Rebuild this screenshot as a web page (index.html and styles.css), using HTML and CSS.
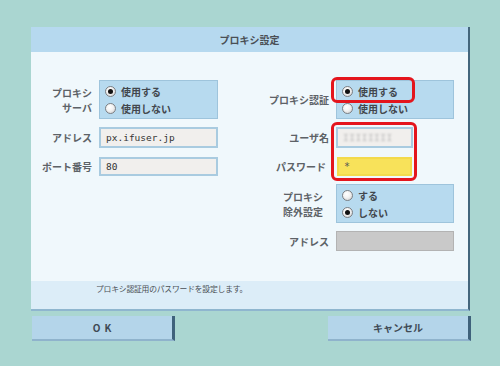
FILE: index.html
```html
<!DOCTYPE html>
<html lang="ja">
<head>
<meta charset="utf-8">
<title>プロキシ設定</title>
<link rel="stylesheet" href="styles.css">
</head>
<body>
<div class="screen">
  <div class="dialog">
    <div class="title">プロキシ設定</div>
    <div class="body">
      <div class="form">
        <div class="label l1 r1 two">プロキシ<br>サーバ</div>
        <div class="radiobox c1 r1">
          <div class="opt"><span class="radio on"></span>使用する</div>
          <div class="opt"><span class="radio"></span>使用しない</div>
        </div>
        <div class="label l2 r1">プロキシ認証</div>
        <div class="radiobox c2 r1">
          <div class="opt"><span class="radio on"></span>使用する</div>
          <div class="opt"><span class="radio"></span>使用しない</div>
        </div>

        <div class="label l1 r2">アドレス</div>
        <div class="field c1 r2">px.ifuser.jp</div>
        <div class="label l2 r2">ユーザ名</div>
        <div class="field short c2 r2"><span class="blur">IIIIIIII</span></div>

        <div class="label l1 r3">ポート番号</div>
        <div class="field c1 r3">80</div>
        <div class="label l2 r3 shift">パスワード</div>
        <div class="field pass short c2 r3">*</div>

        <div class="label l2 r4 two shift2">プロキシ<br>除外設定</div>
        <div class="radiobox c2 r4">
          <div class="opt"><span class="radio"></span>する</div>
          <div class="opt"><span class="radio on"></span>しない</div>
        </div>

        <div class="label l2 r5">アドレス</div>
        <div class="field off c2 r5"></div>
      </div>
    </div>
    <div class="footer">プロキシ認証用のパスワードを設定します。</div>
    <div class="mark mark-auth"></div>
    <div class="mark mark-cred"></div>
  </div>
  <div class="buttons">
    <div class="btn ok">OK</div>
    <div class="btn cancel">キャンセル</div>
  </div>
</div>
</body>
</html>
```

FILE: styles.css
```css
html, body {
  margin: 0;
  padding: 0;
}
body {
  width: 500px;
  height: 366px;
  overflow: hidden;
  background: #aad6d1;
  font-family: "Noto Sans CJK JP", "Noto Sans", sans-serif;
}
.screen {
  padding: 27px 0 0 31px;
}
.dialog {
  position: relative;
  width: 437px;
  border-right: 2px solid #44667c;
  border-bottom: 2px solid #8fb6cf;
  background: #eff7fb;
}
.title {
  height: 25px;
  line-height: 25px;
  background: #b6d9ef;
  text-align: center;
  font-size: 10px;
  font-weight: 700;
  color: #4a4f55;
}
.body {
  height: 229px;
  box-sizing: border-box;
  padding-top: 28px;
  background: #f0f8fc;
}
.form {
  display: grid;
  grid-template-columns: 61px 119px 104px 118px;
  grid-template-rows: 39px 21px 20px 39px 20px;
  column-gap: 7px;
  row-gap: 8px;
}
.l1 { grid-column: 1; }
.c1 { grid-column: 2; }
.l2 { grid-column: 3; }
.c2 { grid-column: 4; }
.r1 { grid-row: 1; }
.r2 { grid-row: 2; }
.r3 { grid-row: 3; margin-top: 1px; }
.r4 { grid-row: 4; }
.r5 { grid-row: 5; }

.label {
  display: flex;
  align-items: center;
  justify-content: flex-end;
  text-align: right;
  font-size: 10px;
  font-weight: 700;
  color: #5d6267;
  white-space: nowrap;
}
.label.two {
  line-height: 15px;
}
.label.shift { padding-right: 3px; }
.label.shift2 { padding-right: 6px; }

.radiobox {
  box-sizing: border-box;
  background: #b7daef;
  border: 1px solid #9ec4dc;
  padding: 2px 0 0 5px;
}
.opt {
  display: flex;
  align-items: center;
  height: 17px;
  font-size: 10px;
  font-weight: 700;
  color: #42474d;
}
.radio {
  position: relative;
  width: 11px;
  height: 11px;
  box-sizing: border-box;
  border: 1px solid #7c7f83;
  border-radius: 50%;
  background: radial-gradient(circle at 40% 35%, #ffffff 0%, #f2f2f2 45%, #c9c9c9 100%);
  margin-right: 5px;
  flex: none;
}
.radio.on::after {
  content: "";
  position: absolute;
  left: 2px;
  top: 2px;
  width: 5px;
  height: 5px;
  border-radius: 50%;
  background: #111;
}

.field {
  box-sizing: border-box;
  background: #f1efed;
  border: 2px solid #a9cbe0;
  padding-left: 5px;
  display: flex;
  align-items: center;
  font-family: "DejaVu Sans Mono", monospace;
  font-size: 9.5px;
  color: #333;
}
.field.short {
  width: 77px;
}
.field.pass {
  background: #f8e25a;
  border-color: #f3da4c;
  font-size: 10px;
  color: #555;
  margin-left: 1px;
  width: 75px;
}
.field.off {
  background: #c9c9c9;
  border: 1px solid #b3b3b3;
}
.blur {
  color: #b9b9b9;
  letter-spacing: 0.5px;
  filter: blur(0.8px);
}

.footer {
  height: 28px;
  line-height: 16px;
  background: #dcedf8;
  padding-left: 65px;
  font-size: 7.8px;
  color: #4a4f55;
  letter-spacing: -0.2px;
  box-sizing: border-box;
}

.mark {
  position: absolute;
  box-sizing: border-box;
  border: 3px solid #e4151d;
  border-radius: 6px;
}
.mark-auth {
  left: 300px;
  top: 50px;
  width: 84px;
  height: 26px;
}
.mark-cred {
  left: 300px;
  top: 95px;
  width: 86px;
  height: 59px;
}

.buttons {
  display: flex;
  justify-content: space-between;
  width: 440px;
  margin-top: 5px;
  padding-left: 1px;
  box-sizing: border-box;
}
.btn {
  width: 143px;
  height: 25px;
  box-sizing: border-box;
  background: #b4d5ea;
  border-right: 3px solid #3f627b;
  border-bottom: 2px solid #8fb3cc;
  display: flex;
  align-items: center;
  justify-content: center;
  font-size: 10px;
  font-weight: 700;
  color: #3f4a55;
}
.btn.ok {
  letter-spacing: 4px;
  padding-left: 4px;
}
```
